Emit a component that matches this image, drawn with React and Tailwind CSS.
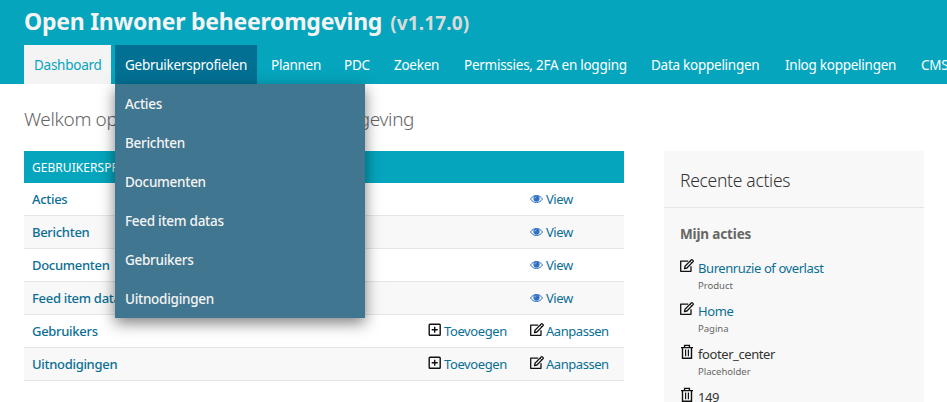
const NAV = [
  ['Dashboard', 'w-[87px] bg-[#f4f4f4] text-[#05a5bd]'],
  ['Gebruikersprofielen', 'w-[142px] bg-[#027093] text-white'],
  ['Plannen', 'w-[69px] text-white'],
  ['PDC', 'w-[46px] text-white'],
  ['Zoeken', 'w-[66px] text-white'],
  ['Permissies, 2FA en logging', 'w-[183px] text-white'],
  ['Data koppelingen', 'w-[130px] text-white'],
  ['Inlog koppelingen', 'w-[132px] text-white'],
  ['CMS', 'w-[48px] text-white'],
];

const MENU = ['Acties', 'Berichten', 'Documenten', 'Feed item datas', 'Gebruikers', 'Uitnodigingen'];

const RECENT = [
  ['edit', 'Burenruzie of overlast', 'Product'],
  ['edit', 'Home', 'Pagina'],
  ['trash', 'footer_center', 'Placeholder'],
  ['trash', '149', ''],
];

function EyeIcon() {
  return (
    <svg className="mt-[2px] h-[14px] w-[13px] shrink-0" viewBox="0 0 13 14" fill="none">
      <path d="M.5 7C2.1 4.6 4.2 3.5 6.5 3.5S10.900 4.600 12.500 7C10.900 9.400 8.800 10.500 6.500 10.500S2.100 9.400.500 7Z" stroke="#2c6fc4" strokeWidth="1" />
      <circle cx="6.500" cy="6.600" r="3.100" fill="#2c6fc4" />
      <path d="M4.900 6.500c0-1 .6-1.600 1.600-1.600" stroke="#c5daf3" strokeWidth=".7" />
    </svg>
  );
}

function PlusIcon() {
  return (
    <svg className="mt-px h-[14px] w-[13px] shrink-0" viewBox="0 0 13 14" fill="none" stroke="#111" strokeWidth="1.400">
      <rect x="1.200" y="1.200" width="11" height="11" rx=".8" />
      <path d="M6.700 3.700v6M3.700 6.700h6" />
    </svg>
  );
}

function EditIcon() {
  return (
    <svg className="mt-px h-[14px] w-[14px] shrink-0" viewBox="0 0 14 14" fill="none" stroke="#111" strokeWidth="1.300" strokeLinejoin="round">
      <path d="M8.200 2.100H.7v10.200h10.300V7.200" />
      <path d="M4.500 9.600l.5-2.300 6-6.200c.5-.5 1.100-.5 1.600 0l.3.3c.5.5.5 1 0 1.500L6.900 9z" />
      <path d="M10 2.200l1.900 1.800" strokeWidth="1" />
    </svg>
  );
}

function TrashIcon() {
  return (
    <svg className="h-[15px] w-[14px] shrink-0" viewBox="0 0 14 15" fill="none" stroke="#111" strokeWidth="1.400">
      <path d="M1 3.600h12M4.600 3.400V1.400h4.800v2M2.500 3.600v10.600h9V3.600" />
      <path d="M5.600 5.600v6.600M8.400 5.600v6.600" strokeWidth="1.200" />
    </svg>
  );
}

function TableRow({ name, index }) {
  const editable = index > 3;
  return (
    <div className={`flex h-[33px] items-center border-b border-[#e6e6e6] pl-2 text-[13px] text-[#0b6f94] ${index % 2 ? 'bg-[#f8f8f8]' : 'bg-white'}`}>
      <div className="w-[396px] pt-px font-medium tracking-[-0.3px]">{name}</div>
      <div className="flex w-[102px] gap-[3px]">
        {editable && (
          <>
            <PlusIcon />
            <span className="leading-[18px] tracking-[-0.4px]">Toevoegen</span>
          </>
        )}
      </div>
      <div className={`flex ${editable ? 'gap-[2px]' : 'gap-[3px]'}`}>
        {editable ? <EditIcon /> : <EyeIcon />}
        <span className="leading-[18px] tracking-[-0.45px]">{editable ? 'Aanpassen' : 'View'}</span>
      </div>
    </div>
  );
}

export default function App() {
  return (
    <div className="h-[402px] w-[947px] overflow-hidden bg-white font-['Noto_Sans','Open_Sans',sans-serif]">
      <header className="h-[84px] bg-[#05a5bd] pl-6">
        <h1 className="flex h-[45px] items-baseline gap-2 whitespace-nowrap pt-[4px] font-bold leading-[34px]">
          <span className="text-[23px] tracking-[-0.25px] text-[#f4f4f4]">Open Inwoner beheeromgeving</span>
          <span className="text-[19px] tracking-[0.15px] text-[#dadada]">(v1.17.0)</span>
        </h1>
        <nav className="flex gap-1">
          {NAV.map(([label, style], i) => (
            <div key={label} className={`relative h-[39px] shrink-0 whitespace-nowrap pl-[10px] text-[13.5px] leading-[41px] tracking-[-0.26px] ${style}`}>
              {label}
              {i === 1 && (
                <div className="absolute left-0 top-[39px] z-10 h-[234px] w-[250px] bg-[#417690] shadow-[0_5px_14px_rgba(0,0,0,0.5)]">
                  {MENU.map((m) => (
                    <div key={m} className="h-[39px] pl-[10px] font-medium leading-[41px] tracking-[-0.28px] text-[#f4f4f4]">{m}</div>
                  ))}
                </div>
              )}
            </div>
          ))}
        </nav>
      </header>
      <main className="px-6">
        <h2 className="flex h-[67px] items-center whitespace-nowrap pt-[3px] text-[19px] font-light tracking-[-0.37px] text-[#666]">
          Welkom op de Open Inwoner beheeromgeving
        </h2>
        <div className="flex gap-10">
          <section className="w-[600px] shrink-0">
            <div className="h-8 bg-[#05a5bd] pl-2 text-[12px] uppercase leading-[33px] tracking-[0.05px] text-white">Gebruikersprofielen</div>
            {MENU.map((name, i) => (
              <TableRow key={name} name={name} index={i} />
            ))}
          </section>
          <aside className="h-[251px] w-[260px] shrink-0 bg-[#f8f8f8]">
            <h2 className="h-[57px] border-b border-[#e6e6e6] pl-4 text-[17.5px] font-[350] leading-[58px] tracking-[-0.3px] text-[#333]">Recente acties</h2>
            <h3 className="pl-4 pt-[16px] text-[13.5px] font-bold leading-[20px] tracking-[-0.15px] text-[#666]">Mijn acties</h3>
            <ul className="pl-4 pt-[14px]">
              {RECENT.map(([icon, title, kind]) => (
                <li key={title} className="flex h-[43px] gap-1">
                  {icon === 'edit' ? <EditIcon /> : <TrashIcon />}
                  <div className="whitespace-nowrap">
                    <div className={`text-[13px] leading-[20px] tracking-[-0.42px] ${icon === 'edit' ? 'text-[#0b6f94]' : 'text-[#333]'}`}>{title}</div>
                    <div className="text-[9.5px] leading-[15px] text-[#666]">{kind}</div>
                  </div>
                </li>
              ))}
            </ul>
          </aside>
        </div>
      </main>
    </div>
  );
}
